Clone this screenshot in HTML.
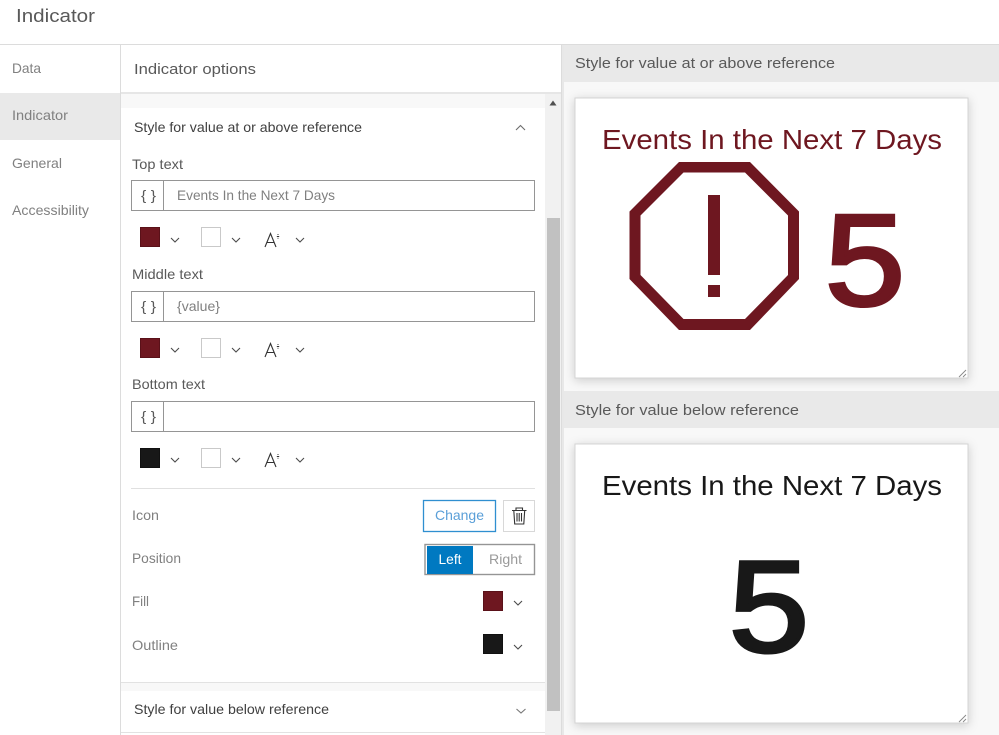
<!DOCTYPE html>
<html lang="en"><head><meta charset="utf-8"><title>Indicator</title>
<style>
html,body{margin:0;padding:0;background:#fff;overflow:hidden}
svg{display:block}
text{font-family:"Liberation Sans",sans-serif;font-size:14px;fill:#6e6e6e}
.d{fill:#595959}.l{fill:#808080}
.c{fill:none;stroke:#4a4a4a;stroke-width:1.1}
.m{fill:#6e1720}
</style></head><body>
<svg width="999" height="735" viewBox="0 0 999 735" xmlns="http://www.w3.org/2000/svg">
<defs>
<filter id="s" x="-10%" y="-10%" width="120%" height="120%"><feDropShadow dx="0" dy="2" stdDeviation="5" flood-color="#000" flood-opacity=".18"/></filter>
<g id="chev"><path class="c" d="M-4-2 0 2 4-2"/></g>
<g id="font"><path d="M-.5 7 5-6.500 10.500 7M1.500 2.500H8.500" fill="none" stroke="#333" stroke-width="1.100"/><path d="M11.300-3.500h2.400M12.500-6v1M12.500-2.300v1" stroke="#333" fill="none" stroke-width=".9"/></g>
</defs>
<rect width="999" height="735" fill="#fff"/>
<!-- Header -->
<text x="16" y="22" style="font-size:18px" class="d" textLength="79" lengthAdjust="spacingAndGlyphs">Indicator</text>
<rect y="44" width="999" height="1" fill="#dcdcdc"/>
<!-- Left nav -->
<rect x="0" y="93" width="120" height="47" fill="#e9e9e9"/>
<rect x="120" y="45" width="1" height="690" fill="#dcdcdc"/>
<text x="12" y="73" class="l" textLength="29" lengthAdjust="spacingAndGlyphs">Data</text>
<text x="12" y="120" class="l" textLength="56" lengthAdjust="spacingAndGlyphs">Indicator</text>
<text x="12" y="168" class="l" textLength="50" lengthAdjust="spacingAndGlyphs">General</text>
<text x="12" y="215" class="l" textLength="77" lengthAdjust="spacingAndGlyphs">Accessibility</text>
<!-- Options panel -->
<text x="134" y="74" style="font-size:15px" class="d" textLength="122" lengthAdjust="spacingAndGlyphs">Indicator options</text>
<rect x="121" y="92" width="441" height="2" fill="#e6e6e6"/>
<rect x="121" y="94" width="424" height="14" fill="#f8f8f8"/>
<rect x="545" y="94" width="17" height="641" fill="#f1f1f1"/>
<rect x="547" y="218" width="13" height="493" fill="#c1c1c1"/>
<path d="M549.500 105.500 553 100.500 556.500 105.500Z" fill="#505050"/>
<rect x="561" y="45" width="1" height="690" fill="#dcdcdc"/>
<text x="134" y="132" style="fill:#404040" textLength="228" lengthAdjust="spacingAndGlyphs">Style for value at or above reference</text>
<path d="M516 130 520.500 125.500 525 130" fill="none" stroke="#6e6e6e" stroke-width="1.100"/>
<!-- Top text -->
<text x="132" y="169" class="d" textLength="51" lengthAdjust="spacingAndGlyphs">Top text</text>
<rect x="131.500" y="180.500" width="403" height="30" fill="#fff" stroke="#959595"/>
<rect x="163" y="181" width="1" height="29" fill="#959595"/>
<text x="141" y="200" class="d" textLength="15" lengthAdjust="spacingAndGlyphs">{ }</text>
<text x="177" y="200" class="l" textLength="158" lengthAdjust="spacingAndGlyphs">Events In the Next 7 Days</text>
<rect x="140.500" y="227.500" width="19" height="19" class="m" stroke="#5a1119"/>
<use href="#chev" x="175" y="240"/>
<rect x="201.500" y="227.500" width="19" height="19" fill="#fff" stroke="#c9c9c9"/>
<use href="#chev" x="236" y="240"/>
<use href="#font" x="265.500" y="240"/>
<use href="#chev" x="300" y="240"/>
<!-- Middle text -->
<text x="132" y="279" class="d" textLength="71" lengthAdjust="spacingAndGlyphs">Middle text</text>
<rect x="131.500" y="291.500" width="403" height="30" fill="#fff" stroke="#959595"/>
<rect x="163" y="292" width="1" height="29" fill="#959595"/>
<text x="141" y="311" class="d" textLength="15" lengthAdjust="spacingAndGlyphs">{ }</text>
<text x="177" y="311" class="l" textLength="43" lengthAdjust="spacingAndGlyphs">{value}</text>
<rect x="140.500" y="338.500" width="19" height="19" class="m" stroke="#5a1119"/>
<use href="#chev" x="175" y="350"/>
<rect x="201.500" y="338.500" width="19" height="19" fill="#fff" stroke="#c9c9c9"/>
<use href="#chev" x="236" y="350"/>
<use href="#font" x="265.500" y="350"/>
<use href="#chev" x="300" y="350"/>
<!-- Bottom text -->
<text x="132" y="389" class="d" textLength="73" lengthAdjust="spacingAndGlyphs">Bottom text</text>
<rect x="131.500" y="401.500" width="403" height="30" fill="#fff" stroke="#959595"/>
<rect x="163" y="402" width="1" height="29" fill="#959595"/>
<text x="141" y="421" class="d" textLength="15" lengthAdjust="spacingAndGlyphs">{ }</text>
<rect x="140.500" y="448.500" width="19" height="19" fill="#181818" stroke="#111"/>
<use href="#chev" x="175" y="460"/>
<rect x="201.500" y="448.500" width="19" height="19" fill="#fff" stroke="#c9c9c9"/>
<use href="#chev" x="236" y="460"/>
<use href="#font" x="265.500" y="460"/>
<use href="#chev" x="300" y="460"/>
<rect x="131" y="488" width="404" height="1" fill="#e0e0e0"/>
<!-- Icon -->
<text x="132" y="520" class="l" textLength="27" lengthAdjust="spacingAndGlyphs">Icon</text>
<rect x="423.500" y="500.500" width="72" height="31" fill="#fff" stroke="#2f8fd0" stroke-width="1.300"/>
<text x="435" y="520" style="fill:#5a9fd8" textLength="49" lengthAdjust="spacingAndGlyphs">Change</text>
<rect x="503.500" y="500.500" width="31" height="31" fill="#fff" stroke="#d8d8d8"/>
<path d="M512 510.500h14.500M516 510.500v-2.500h6.500v2.500M513.800 510.500l.9 13.500h9.100l.9-13.500M517 513v8.500M519.200 513v8.500M521.500 513v8.500" fill="none" stroke="#333" stroke-width="1.100"/>
<!-- Position -->
<text x="132" y="563" class="l" textLength="49" lengthAdjust="spacingAndGlyphs">Position</text>
<rect x="425" y="544.500" width="109.500" height="30" fill="#fff" stroke="#959595" stroke-width="1.400"/>
<rect x="427" y="546" width="46" height="28" fill="#0079c1"/>
<text x="438.500" y="564" style="fill:#fff" textLength="23" lengthAdjust="spacingAndGlyphs">Left</text>
<text x="489" y="564" style="fill:#9a9a9a" textLength="33" lengthAdjust="spacingAndGlyphs">Right</text>
<!-- Fill / Outline -->
<text x="132" y="606" class="l" textLength="17" lengthAdjust="spacingAndGlyphs">Fill</text>
<rect x="483.500" y="591.500" width="19" height="19" class="m" stroke="#5a1119"/>
<use href="#chev" x="518" y="603"/>
<text x="132" y="650" class="l" textLength="46" lengthAdjust="spacingAndGlyphs">Outline</text>
<rect x="483.500" y="634.500" width="19" height="19" fill="#181818" stroke="#111"/>
<use href="#chev" x="518" y="647"/>
<rect x="121" y="682" width="424" height="1" fill="#e2e2e2"/>
<rect x="121" y="683" width="424" height="8" fill="#f8f8f8"/>
<text x="134" y="714" style="fill:#404040" textLength="195" lengthAdjust="spacingAndGlyphs">Style for value below reference</text>
<path d="M516.500 709 521 713 525.500 709" fill="none" stroke="#777" stroke-width="1.100"/>
<rect x="121" y="732" width="424" height="1" fill="#e2e2e2"/>
<!-- Preview -->
<rect x="562" y="45" width="437" height="690" fill="#f8f8f8"/>
<rect x="562" y="45" width="2" height="690" fill="#e8e8e8"/>
<rect x="564" y="45" width="435" height="37" fill="#e9e9e9"/>
<text x="575" y="68" style="font-size:15px" class="d" textLength="260" lengthAdjust="spacingAndGlyphs">Style for value at or above reference</text>
<rect x="575" y="98" width="393" height="280" fill="#fff" stroke="#d4d4d4" filter="url(#s)"/>
<text x="602" y="149" style="font-size:28px;fill:#6e1720" textLength="340" lengthAdjust="spacingAndGlyphs">Events In the Next 7 Days</text>
<path fill-rule="evenodd" class="m" d="M679 162H750L799 211.500V279L750 330H679L629.500 279V211.500ZM683.500 172.500 640.500 215.500V275L683.500 319H745L788 275V215.500L745 172.500Z"/>
<rect x="708" y="195" width="12" height="80" class="m"/>
<rect x="708" y="285" width="12" height="12" class="m"/>
<text x="825" y="305" style="font-size:130px;fill:#6e1720;stroke:#6e1720;stroke-width:3.500" textLength="80" lengthAdjust="spacingAndGlyphs">5</text>
<path d="M959 377 966 370M963 377 966 374" stroke="#888" stroke-width=".9" fill="none"/>
<rect x="562" y="391" width="437" height="37" fill="#e9e9e9"/>
<rect x="562" y="391" width="2" height="37" fill="#e8e8e8"/>
<text x="575" y="415" style="font-size:15px" class="d" textLength="224" lengthAdjust="spacingAndGlyphs">Style for value below reference</text>
<rect x="575" y="444" width="393" height="279" fill="#fff" stroke="#d4d4d4" filter="url(#s)"/>
<text x="602" y="495" style="font-size:28px;fill:#181818" textLength="340" lengthAdjust="spacingAndGlyphs">Events In the Next 7 Days</text>
<text x="729" y="651.500" style="font-size:130px;fill:#181818;stroke:#181818;stroke-width:3.500" textLength="80" lengthAdjust="spacingAndGlyphs">5</text>
<path d="M959 722 966 715M963 722 966 719" stroke="#888" stroke-width=".9" fill="none"/>
</svg>
</body></html>
